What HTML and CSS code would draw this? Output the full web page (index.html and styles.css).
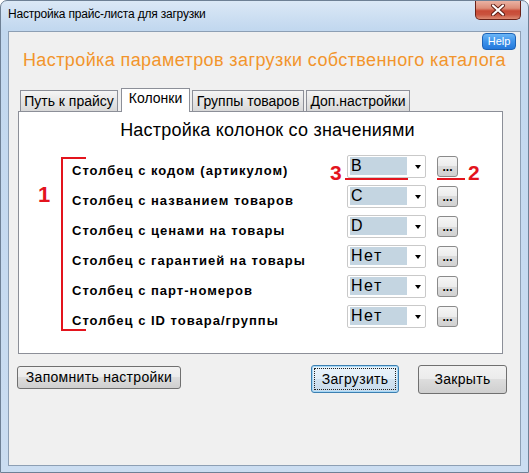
FILE: index.html
```html
<!DOCTYPE html>
<html lang="ru">
<head>
<meta charset="utf-8">
<title>Настройка прайс-листа для загрузки</title>
<link rel="stylesheet" href="styles.css">
</head>
<body>
<div class="window">
  <div class="titlebar">
    <span class="title">Настройка прайс-листа для загрузки</span>
    <div class="close">
      <svg width="16" height="12" viewBox="0 0 16 12">
        <path d="M3 1.5 L13 10.5 M13 1.5 L3 10.5" stroke="#5a1a12" stroke-width="4" stroke-linecap="round"/>
        <path d="M3 1.5 L13 10.5 M13 1.5 L3 10.5" stroke="#ffffff" stroke-width="2.2" stroke-linecap="round"/>
      </svg>
    </div>
  </div>
  <div class="client">
    <div class="help-row"><span class="help">Help</span></div>
    <h1 class="heading">Настройка параметров загрузки собственного каталога</h1>
    <div class="tabs">
      <div class="tab t1">Путь к прайсу</div>
      <div class="tab t2 active">Колонки</div>
      <div class="tab t3">Группы товаров</div>
      <div class="tab t4">Доп.настройки</div>
    </div>
    <div class="panel">
      <div class="panel-title">Настройка колонок со значениями</div>
      <div class="rows">
        <div class="bracket"></div>
        <span class="mark m1">1</span>
        <span class="mark m3">3</span>
        <span class="mark m2">2</span>
        <div class="uline u3"></div>
        <div class="uline u2"></div>

        <div class="row">
          <span class="label">Столбец с кодом (артикулом)</span>
          <div class="combo"><span class="field">B</span><span class="arrow"></span></div>
          <div class="dots">...</div>
        </div>
        <div class="row">
          <span class="label">Столбец с названием товаров</span>
          <div class="combo"><span class="field">C</span><span class="arrow"></span></div>
          <div class="dots">...</div>
        </div>
        <div class="row">
          <span class="label">Столбец с ценами на товары</span>
          <div class="combo"><span class="field">D</span><span class="arrow"></span></div>
          <div class="dots">...</div>
        </div>
        <div class="row">
          <span class="label">Столбец с гарантией на товары</span>
          <div class="combo"><span class="field">Нет</span><span class="arrow"></span></div>
          <div class="dots">...</div>
        </div>
        <div class="row">
          <span class="label">Столбец с парт-номеров</span>
          <div class="combo"><span class="field">Нет</span><span class="arrow"></span></div>
          <div class="dots">...</div>
        </div>
        <div class="row">
          <span class="label">Столбец с ID товара/группы</span>
          <div class="combo"><span class="field">Нет</span><span class="arrow"></span></div>
          <div class="dots">...</div>
        </div>
      </div>
    </div>
    <div class="buttons">
      <div class="btn b-save">Запомнить настройки</div>
      <div class="spacer"></div>
      <div class="btn b-load">Загрузить</div>
      <div class="btn b-close">Закрыть</div>
    </div>
  </div>
</div>
</body>
</html>
```
FILE: styles.css
```css
html, body {
  margin: 0;
  padding: 0;
}
body {
  width: 529px;
  height: 473px;
  overflow: hidden;
  font-family: "Liberation Sans", Arial, sans-serif;
  background: #ffffff;
}
.window {
  width: 529px;
  height: 473px;
  box-sizing: border-box;
  border: 1px solid #6e8095;
  border-radius: 7px 7px 0 0;
  background: linear-gradient(#dbe8f6 0px, #c2d8ef 28px, #c6daf0 60%, #cbddf1 100%);
  display: flex;
  flex-direction: column;
}
.titlebar {
  height: 30px;
  flex: none;
  display: flex;
  justify-content: space-between;
  align-items: flex-start;
}
.title {
  padding: 6px 0 0 7px;
  font-size: 12px;
  line-height: 15px;
  letter-spacing: -0.2px;
  color: #000;
}
.close {
  margin-right: 7px;
  width: 46px;
  height: 19px;
  box-sizing: border-box;
  border: 1px solid #6a2218;
  border-top: none;
  border-radius: 0 0 5px 5px;
  background: linear-gradient(#eab2a3 0%, #dd8d78 40%, #c84a36 55%, #c9533e 75%, #dc8a72 100%);
  display: flex;
  align-items: center;
  justify-content: center;
}
.client {
  flex: 1;
  margin: 0 7px 6px 7px;
  border: 1px solid #8d9fb4;
  background: #f0f0f0;
  display: flex;
  flex-direction: column;
}
.help-row {
  height: 18px;
  box-sizing: border-box;
  padding: 1px 4px 0 0;
  display: flex;
  justify-content: flex-end;
}
.help {
  width: 34px;
  height: 17px;
  box-sizing: border-box;
  border: 1px solid #1d62b4;
  border-radius: 4px;
  background: linear-gradient(#6cb6f6, #3d92ea 50%, #2479dc);
  color: #fff;
  font-size: 11px;
  line-height: 15px;
  text-align: center;
}
.heading {
  margin: 0;
  height: 20px;
  font-size: 18px;
  font-weight: normal;
  line-height: 20px;
  letter-spacing: 0.4px;
  text-align: center;
  color: #f2952c;
  white-space: nowrap;
}
.tabs {
  margin-top: 18px;
  height: 23px;
  padding-left: 11px;
  display: flex;
  align-items: flex-end;
  position: relative;
  z-index: 1;
}
.tab {
  height: 21px;
  box-sizing: border-box;
  border: 1px solid #8c8f98;
  border-bottom: none;
  background: linear-gradient(#f5f5f5, #e6e6e6 50%, #d8d8d8);
  font-size: 14px;
  line-height: 21px;
  text-align: center;
  white-space: nowrap;
  color: #000;
}
.t1 { width: 98px; margin-right: 3px; }
.t2 { width: 69px; margin-right: 2px; }
.t3 { width: 112px; margin-right: 2px; }
.t4 { width: 104px; }
.tab.active {
  height: 24px;
  margin-bottom: -1px;
  background: #ffffff;
  line-height: 19px;
}
.panel {
  margin: 0 17px 0 9px;
  height: 243px;
  flex: none;
  box-sizing: border-box;
  border: 1px solid #8c8f98;
  background: #ffffff;
}
.panel-title {
  padding: 7px 0 0 14px;
  font-size: 18px;
  line-height: 22px;
  letter-spacing: 0.2px;
  text-align: center;
  color: #000;
}
.rows {
  position: relative;
  padding: 14px 0 0 53px;
}
.row {
  height: 30px;
  display: flex;
  align-items: flex-start;
}
.label {
  width: 275px;
  padding-top: 8px;
  font-size: 13px;
  line-height: 15px;
  font-weight: bold;
  letter-spacing: 1px;
  white-space: nowrap;
  color: #000;
}
.combo {
  width: 79px;
  height: 23px;
  box-sizing: border-box;
  border: 1px solid #c9c9c9;
  border-radius: 2px;
  background: #fff;
  display: flex;
  align-items: flex-start;
  padding: 1px 0 0 2px;
}
.field {
  width: 57px;
  height: 18px;
  background: #c4d5e1;
  font-size: 16px;
  line-height: 18px;
  letter-spacing: 1.5px;
  padding-left: 1px;
  box-sizing: border-box;
  color: #000;
}
.arrow {
  width: 0;
  height: 0;
  margin: 8px 0 0 8px;
  border-left: 3.5px solid transparent;
  border-right: 3.5px solid transparent;
  border-top: 4px solid #000;
}
.dots {
  margin: 1px 0 0 11px;
  width: 21px;
  height: 21px;
  box-sizing: border-box;
  border: 1px solid #8a8a8a;
  border-radius: 3px;
  background: linear-gradient(#f6f6f6, #ececec 50%, #dcdcdc 50%, #d0d0d0);
  font-size: 12px;
  font-weight: bold;
  line-height: 20px;
  text-align: center;
  color: #000;
}
.bracket {
  position: absolute;
  left: 42px;
  top: 16px;
  width: 23px;
  height: 170px;
  border: 2px solid #e3141d;
  border-right: none;
}
.mark {
  position: absolute;
  font-weight: bold;
  color: #e3141d;
  line-height: 22px;
}
.m1 { left: 19px; top: 43px; font-size: 22px; }
.m3 { left: 311px; top: 21px; font-size: 21px; }
.m2 { left: 449px; top: 21px; font-size: 21px; }
.uline {
  position: absolute;
  height: 2px;
  background: #e3141d;
}
.u3 { left: 326px; top: 37px; width: 63px; }
.u2 { left: 418px; top: 37px; width: 28px; }
.buttons {
  display: flex;
  align-items: flex-start;
  padding: 11px 13px 0 8px;
}
.spacer { flex: 1; }
.btn {
  box-sizing: border-box;
  border: 1px solid #707070;
  border-radius: 3px;
  background: linear-gradient(#f2f2f2 0%, #ebebeb 50%, #dddddd 50%, #cfcfcf 100%);
  font-size: 14px;
  letter-spacing: 0.3px;
  text-align: center;
  color: #000;
  white-space: nowrap;
}
.b-save {
  margin-top: 1px;
  width: 164px;
  height: 23px;
  line-height: 21px;
}
.b-load {
  width: 88px;
  height: 28px;
  line-height: 26px;
  margin-right: 19px;
  border-color: #3c7fb1;
  box-shadow: inset 0 0 0 1px #a7d8f6;
  background: linear-gradient(#eaf4fb 0%, #e2eef8 50%, #d2e3f1 50%, #c8dbec 100%);
  position: relative;
}
.b-load::after {
  content: "";
  position: absolute;
  left: 2px;
  top: 2px;
  right: 2px;
  bottom: 2px;
  border: 1px dotted #222;
}
.b-close {
  width: 89px;
  height: 29px;
  line-height: 27px;
}
```
